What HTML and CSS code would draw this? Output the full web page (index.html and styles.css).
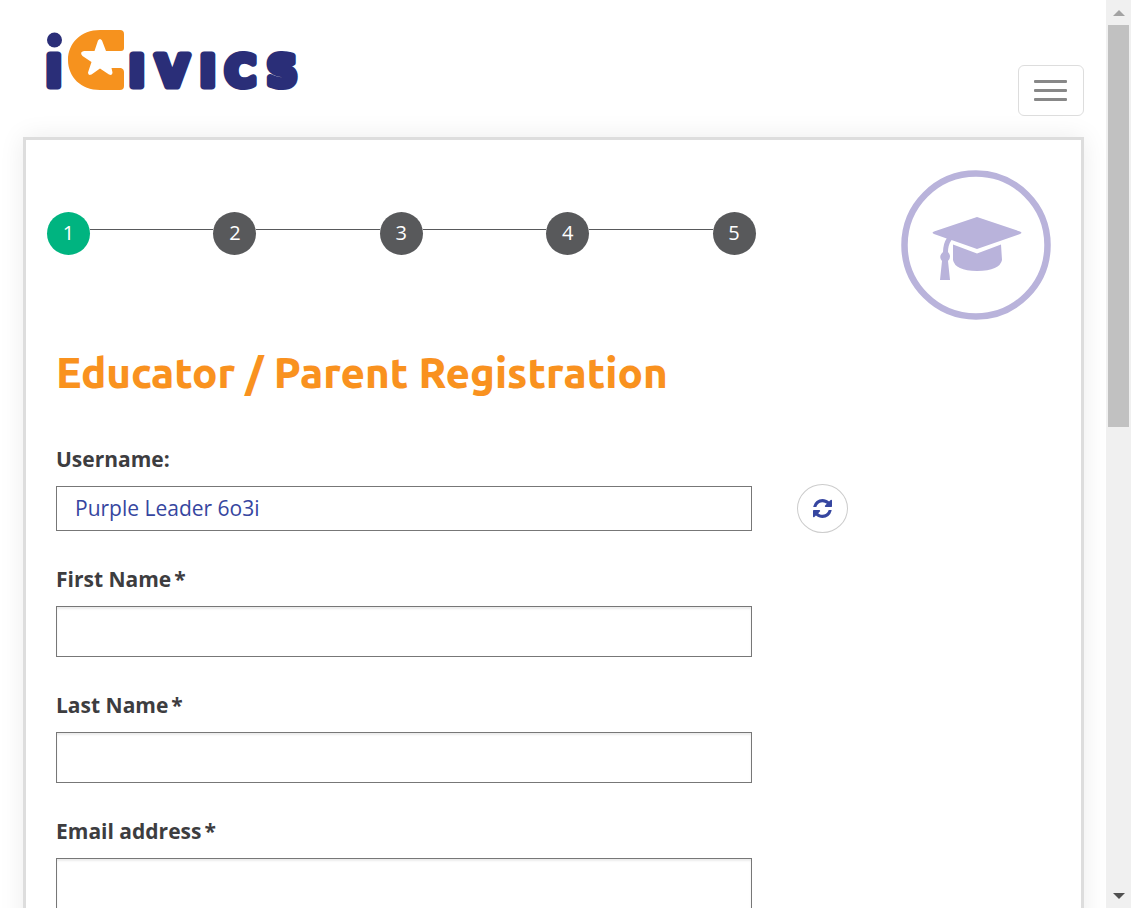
FILE: index.html
```html
<!DOCTYPE html>
<html lang="en">
<head>
<meta charset="utf-8">
<meta name="viewport" content="width=device-width, initial-scale=1">
<title>Educator / Parent Registration</title>
<link rel="stylesheet" href="styles.css">
</head>
<body>
<div class="page">
  <header class="header">
    <a class="brand" href="#" aria-label="iCivics">
      <svg class="logo" viewBox="0 0 262 64" width="262" height="64">
        <circle class="logo-ink" cx="9.500" cy="11" r="7.500"/>
        <text class="logo-text" x="1" y="57">I</text>
        <path class="logo-mark" d="M55 1H75Q79 1 79 5V19Q79 22 76 22H61L57 11.500Q55 8.500 53 11.500L49.500 22H39Q34 23 37.500 27L46.500 33L43 43.500Q43 47 46.500 45.500L55 39.500L64 45.500Q67.500 47 67.500 43.500L66.500 39H76Q79 40 79 43V57Q79 61 75 61H55C36 61 23 48 23 31S36 1 55 1Z"/>
        <text class="logo-text" x="84 111 155 180 222" y="57">IVICS</text>
      </svg>
    </a>
    <button class="menu" type="button" aria-label="Menu">
      <span class="menu-bar"></span><span class="menu-bar"></span><span class="menu-bar"></span>
    </button>
  </header>
  <main class="card">
    <div class="top">
      <ol class="steps">
        <li class="step"><span class="dot dot-active">1</span></li>
        <li class="step"><span class="dot">2</span></li>
        <li class="step"><span class="dot">3</span></li>
        <li class="step"><span class="dot">4</span></li>
        <li class="step"><span class="dot">5</span></li>
      </ol>
      <svg class="badge" viewBox="0 0 150 150" width="150" height="150" aria-hidden="true">
        <circle cx="75" cy="75" r="71.500" fill="none" stroke="#b9b3db" stroke-width="6.500"/>
        <g fill="#b9b3db">
          <path d="M76 47L119 61.500Q122 62.800 119 64L76 79L50.500 70Q47 75 47 82Q51 86.500 47 91L49 110H39L41 91Q37 86.500 42 82Q42.300 73 45.700 68.500L33 64Q30 62.800 33 61.500Z"/>
          <path d="M52 74.500L76 83.500L100 74.500L101 90Q99 100.500 76 101Q54 100.500 52 90Z"/>
        </g>
      </svg>
    </div>
    <h1 class="title">Educator / Parent Registration</h1>
    <form class="form">
      <div class="field">
        <label class="label" for="username">Username:</label>
        <div class="row">
          <input class="input input-filled" id="username" type="text" value="Purple Leader 6o3i" readonly>
          <button class="refresh" type="button" aria-label="New username">
            <svg viewBox="0 0 1536 1536" width="19" height="19" aria-hidden="true"><path fill="#3646a0" d="M1511 928q0 5-1 7-64 268-268 434.500T764 1536q-146 0-282.500-55T238 1324l-129 129q-19 19-45 19t-45-19-19-45V960q0-26 19-45t45-19h448q26 0 45 19t19 45-19 45l-137 137q71 66 161 102t187 36q134 0 250-65t186-179q11-17 53-117 8-23 30-23h192q13 0 22.500 9.500t9.500 22.500zM1536 128v448q0 26-19 45t-45 19h-448q-26 0-45-19t-19-45 19-45l138-138Q969 256 768 256q-134 0-250 65T332 500q-11 17-53 117-8 23-30 23H50q-13 0-22.500-9.500T18 608v-7q65-268 270-434.500T768 0q146 0 284 55.500T1297 212l130-129q19-19 45-19t45 19 19 45z"/></svg>
          </button>
        </div>
      </div>
      <div class="field">
        <label class="label" for="first">First Name<span class="req">*</span></label>
        <input class="input" id="first" type="text" required>
      </div>
      <div class="field">
        <label class="label" for="last">Last Name<span class="req">*</span></label>
        <input class="input" id="last" type="text" required>
      </div>
      <div class="field">
        <label class="label" for="email">Email address<span class="req">*</span></label>
        <input class="input" id="email" type="email" required>
      </div>
    </form>
  </main>
</div>
<div class="scrollbar" aria-hidden="true">
  <span class="arrow arrow-up"></span>
  <span class="track"><span class="thumb"></span></span>
  <span class="arrow arrow-down"></span>
</div>
</body>
</html>
```
FILE: styles.css
```css
* { box-sizing: border-box; }

body {
  margin: 0;
  height: 100vh;
  display: grid;
  grid-template-columns: 1fr 25px;
  overflow: hidden;
  background: #fff;
  color: #3d3d3f;
  font-family: "Open Sans", "Noto Sans", sans-serif;
  font-size: 21px;
}

.page { height: 100vh; overflow: hidden; padding: 0 22px 0 23px; }

.header {
  display: flex;
  justify-content: space-between;
  align-items: flex-start;
  height: 137px;
  padding: 29px 0 0 22px;
}

.brand, .logo { display: block; }
.logo { overflow: visible; }
.logo-ink { fill: #2a2e78; }
.logo-mark { fill: #f6921e; }
.logo-text {
  fill: #2a2e78;
  stroke: #2a2e78;
  stroke-width: 7px;
  stroke-linejoin: round;
  font-family: "DejaVu Sans", sans-serif;
  font-weight: 700;
  font-size: 42px;
}

.menu {
  display: flex;
  flex-direction: column;
  align-items: center;
  justify-content: center;
  gap: 6px;
  width: 66px;
  height: 51px;
  margin-top: 36px;
  padding: 0 2px 0 0;
  background: #fff;
  border: 1px solid #ddd;
  border-radius: 6px;
}
.menu-bar { width: 33px; height: 3px; border-radius: 1px; background: #888; }

.card {
  min-height: 100vh;
  padding: 30px;
  border: 3px solid #ddd;
  background: #fff;
  box-shadow: 0 0 24px rgba(0, 0, 0, 0.08);
}

.top { display: flex; justify-content: space-between; align-items: flex-start; }

.steps {
  display: flex;
  width: calc(70% + 12px);
  margin: 42px 0 0 -9px;
  padding: 0;
  list-style: none;
}
.step { display: flex; flex: 1; }
.step:last-child { flex: none; }
.step:not(:last-child)::after {
  content: "";
  flex: 1;
  height: 1px;
  margin-top: 17px;
  background: #58595b;
}
.dot {
  width: 43px;
  height: 43px;
  border-radius: 50%;
  background: #58595b;
  color: #fff;
  font-size: 20px;
  line-height: 41px;
  text-align: center;
}
.dot-active { background: #00b480; }
.badge { display: block; }

.title {
  margin: 23px 0 0;
  color: #f9921f;
  font-family: Ubuntu, "Noto Sans", sans-serif;
  font-size: 42px;
  font-weight: 800;
  line-height: 60px;
}

.form { margin-top: 41px; }
.field { margin-bottom: 33px; }
.label { display: block; margin-bottom: 12px; font-weight: 700; line-height: 30px; }
.req { margin-left: 3px; }
.row { display: flex; align-items: center; gap: 45px; height: 45px; }
.input {
  display: block;
  width: calc(70% - 1px);
  height: 51px;
  padding: 0 18px;
  border: 1px solid #777;
  border-radius: 0;
  background: #fff;
  box-shadow: inset 0 2px 2px rgba(0, 0, 0, 0.08);
  color: #3646a0;
  font: inherit;
}
.input-filled { height: 45px; padding-bottom: 2px; box-shadow: none; }
.refresh {
  display: flex;
  align-items: center;
  justify-content: center;
  flex: none;
  width: 51px;
  height: 49px;
  padding: 0;
  border: 1px solid #ccc;
  border-radius: 50%;
  background: #fff;
}

.scrollbar { display: flex; flex-direction: column; height: 100vh; background: #f0f0f0; }
.arrow { display: flex; align-items: center; justify-content: center; height: 25px; }
.arrow::before { content: ""; border: 6px solid transparent; }
.arrow-up::before { border-top: 0; border-bottom-color: #a3a3a3; }
.arrow-down::before { border-bottom: 0; border-top-color: #505050; }
.track { flex: 1; padding: 0 2px; }
.thumb { display: block; height: 46.8%; background: #c1c1c1; }
```
